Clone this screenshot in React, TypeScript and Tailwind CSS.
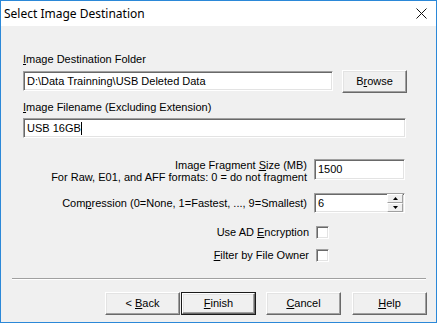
import React from "react";

const font = { fontFamily: '"Liberation Sans", Arial, sans-serif' };

function Sunken({ className = "", children }: { className?: string; children?: React.ReactNode }) {
  return (
    <div
      className={
        "flex items-center bg-white border border-t-[#a0a0a0] border-l-[#a0a0a0] border-r-white border-b-white shadow-[inset_1px_1px_0_#696969,inset_-1px_-1px_0_#e3e3e3] " +
        className
      }
    >
      {children}
    </div>
  );
}

function Btn({ children, isDefault = false, className = "" }: { children: React.ReactNode; isDefault?: boolean; className?: string }) {
  const raised =
    "flex items-center justify-center bg-[#f0f0f0] border border-t-white border-l-white border-r-[#696969] border-b-[#696969] shadow-[inset_-1px_-1px_0_#a0a0a0,inset_1px_1px_0_#e3e3e3] text-[11px] text-black";
  if (isDefault) {
    return (
      <div className={"border border-[#1a1a1a] flex " + className}>
        <div className={raised + " w-full h-full"}>
          <span>{children}</span>
        </div>
      </div>
    );
  }
  return (
    <div className={raised + " " + className}>
      <span>{children}</span>
    </div>
  );
}

const checkBox =
  "ml-[7px] w-[13px] h-[13px] bg-white border border-t-[#a0a0a0] border-l-[#a0a0a0] border-r-white border-b-white shadow-[inset_1px_1px_0_#696969,inset_-1px_-1px_0_#e3e3e3]";

export default function App() {
  return (
    <div
      className="w-[437px] h-[323px] bg-[#f0f0f0] border border-[#2b88d8] flex flex-col overflow-hidden text-black"
      style={font}
    >
      {/* Title bar */}
      <div className="h-[25px] bg-white flex items-center justify-between shrink-0">
        <span className="pl-[3px] text-[12px]" style={{ fontFamily: '"Noto Sans", "Open Sans", sans-serif' }}>
          Select Image Destination
        </span>
        <svg width="11" height="11" viewBox="0 0 11 11" className="mr-[9px]">
          <path d="M0.5 0.5 L10.5 10.5 M10.5 0.5 L0.5 10.5" stroke="#111" strokeWidth="1" />
        </svg>
      </div>

      {/* Body */}
      <div className="flex flex-col pl-[22px] text-[11px] leading-[13px]">
        <div className="mt-[27px]">
          <u>I</u>mage Destination Folder
        </div>
        <div className="mt-[4px] flex items-start">
          <Sunken className="mt-[1px] w-[310px] h-[20px] pl-[3px]">D:\Data Trainning\USB Deleted Data</Sunken>
          <Btn className="ml-[9px] w-[65px] h-[23px]">
            B<u>r</u>owse
          </Btn>
        </div>

        <div className="mt-[8px]">
          <u>I</u>mage Filename (Excluding Extension)
        </div>
        <Sunken className="mt-[4px] w-[383px] h-[20px] pl-[3px]">
          USB 16GB<span className="inline-block w-[1px] h-[13px] bg-black" />
        </Sunken>

        {/* Fragment size */}
        <div className="mt-[21px] flex items-start">
          <div className="w-[284px] text-right leading-[12px]">
            <div>
              Image Fragment <u>S</u>ize (MB)
            </div>
            <div>For Raw, E01, and AFF formats: 0 = do not fragment</div>
          </div>
          <Sunken className="ml-[7px] w-[91px] h-[21px] pl-[3px]">1500</Sunken>
        </div>

        {/* Compression */}
        <div className="mt-[10px] flex items-center">
          <div className="w-[284px] text-right">
            Com<u>p</u>ression (0=None, 1=Fastest, ..., 9=Smallest)
          </div>
          <Sunken className="ml-[7px] w-[91px] h-[20px] pl-[3px] justify-between">
            <span>6</span>
            <div className="flex flex-col w-[16px] h-[18px] mr-[1px]">
              <div className="flex-1 flex items-center justify-center bg-[#f0f0f0] border border-t-white border-l-white border-r-[#a0a0a0] border-b-[#a0a0a0]">
                <svg width="5" height="3" viewBox="0 0 5 3">
                  <path d="M2.5 0 L5 3 L0 3 Z" fill="#000" />
                </svg>
              </div>
              <div className="flex-1 flex items-center justify-center bg-[#f0f0f0] border border-t-white border-l-white border-r-[#a0a0a0] border-b-[#a0a0a0]">
                <svg width="5" height="3" viewBox="0 0 5 3">
                  <path d="M0 0 L5 0 L2.5 3 Z" fill="#000" />
                </svg>
              </div>
            </div>
          </Sunken>
        </div>

        {/* Checkboxes */}
        <div className="mt-[13px] flex items-center">
          <div className="w-[286px] text-right">
            Use AD <u>E</u>ncryption
          </div>
          <div className={checkBox} />
        </div>
        <div className="mt-[10px] flex items-center">
          <div className="w-[286px] text-right">
            <u>F</u>ilter by File Owner
          </div>
          <div className={checkBox} />
        </div>
      </div>

      {/* Separator */}
      <div className="mt-[16px] ml-[11px] w-[414px] h-[2px] border-t border-t-[#a0a0a0] border-b border-b-white" />

      {/* Buttons */}
      <div className="mt-[12px] flex pl-[104px]">
        <Btn className="w-[75px] h-[23px]">
          &lt;&nbsp;<u>B</u>ack
        </Btn>
        <Btn isDefault className="ml-[1px] w-[75px] h-[23px]">
          <u>F</u>inish
        </Btn>
        <Btn className="ml-[10px] w-[75px] h-[23px]">
          <u>C</u>ancel
        </Btn>
        <Btn className="ml-[11px] w-[75px] h-[23px]">
          <u>H</u>elp
        </Btn>
      </div>
    </div>
  );
}
